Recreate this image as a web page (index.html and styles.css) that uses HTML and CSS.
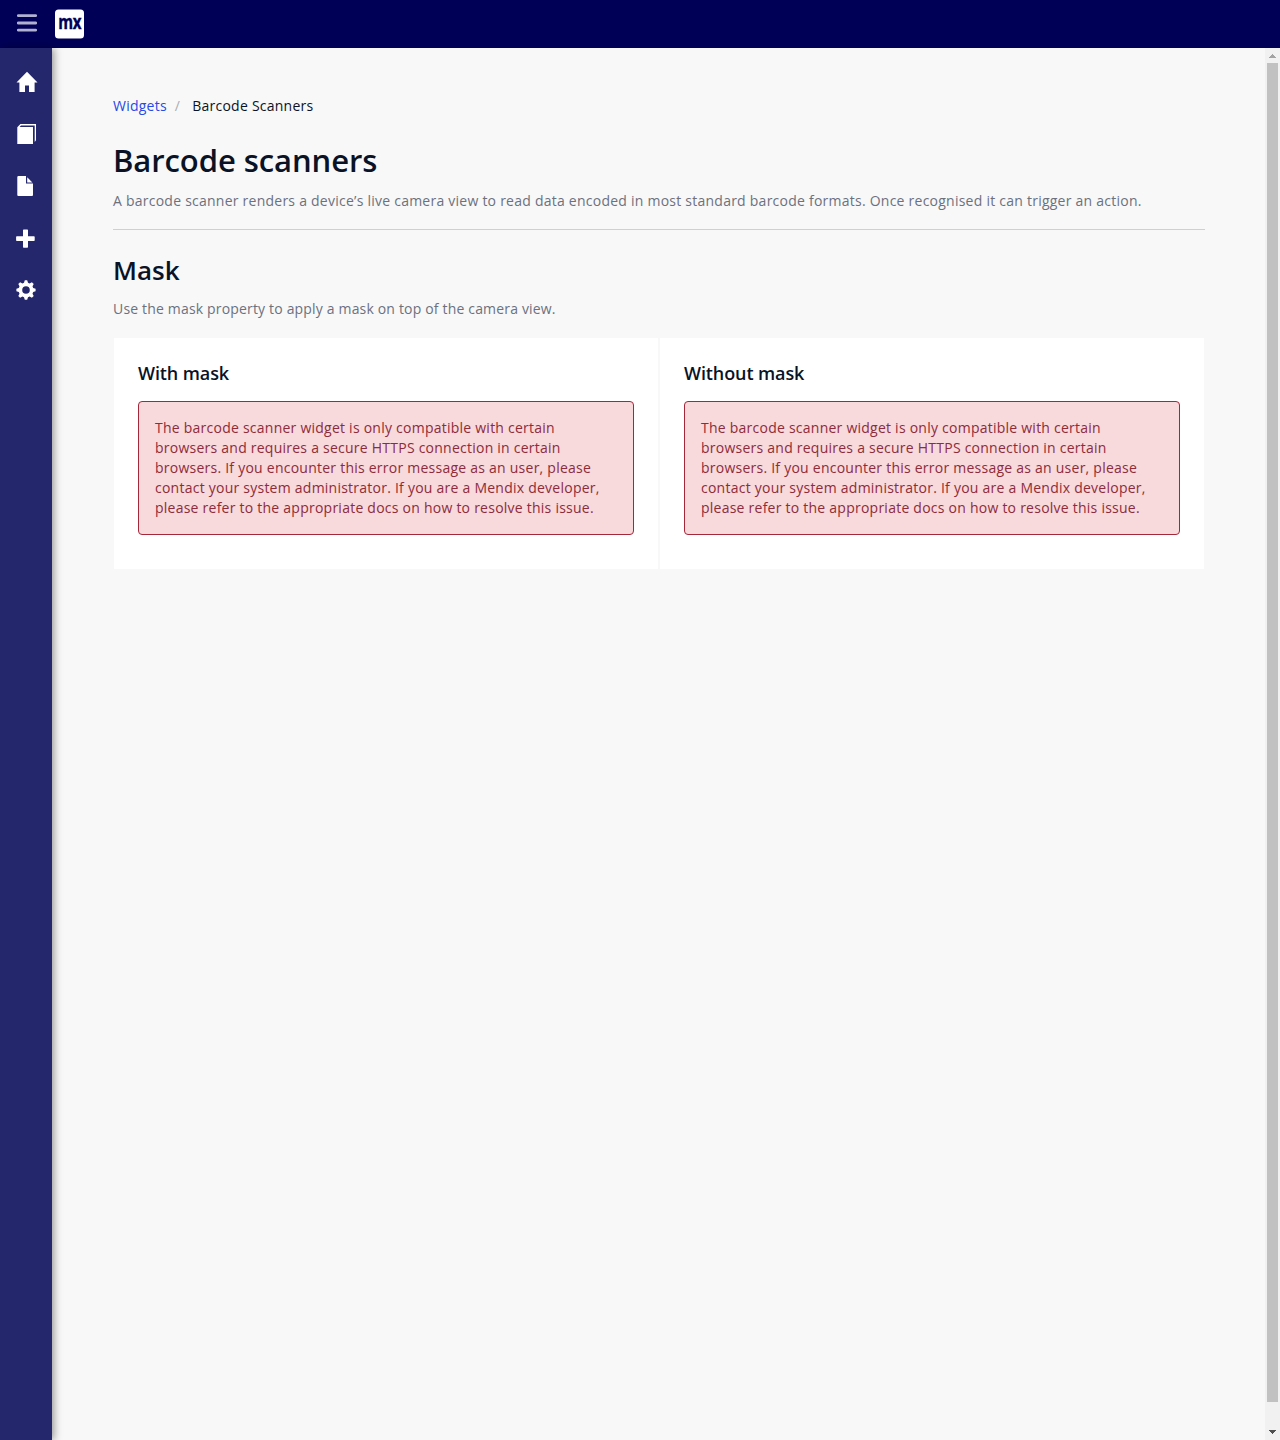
FILE: index.html
```html
<!DOCTYPE html>
<html lang="en">
<head>
<meta charset="utf-8">
<title>Barcode scanners</title>
<link rel="stylesheet" href="styles.css">
</head>
<body>
<header class="topbar">
  <svg class="menu" width="20" height="18" viewBox="0 0 20 18"><path d="M1.3 1.7h17.4M1.3 9h17.4M1.3 16.1h17.4"/></svg>
  <svg class="logo" width="29" height="30" viewBox="0 0 29 30"><rect y=".5" width="29" height="29" rx="3.5"/><text x="3.2" y="20" textLength="22.8" lengthAdjust="spacingAndGlyphs">mx</text></svg>
</header>
<div class="shell">
  <nav class="sidebar">
    <a class="nav-item"><svg viewBox="0 0 22 22"><path d="M11 .7 21.5 11.4H18.6V21H13V14.5H9V21H3.4V11.4H.5Z"/></svg></a>
    <a class="nav-item"><svg viewBox="0 0 22 22"><path d="M1.3 4.2 4.4 1H20V17.3L18.7 19V2.6H5L3.6 4H17V21H1.3Z"/></svg></a>
    <a class="nav-item"><svg viewBox="0 0 22 22"><path d="M1.3 2.2Q1.3 1 2.4 1H10V8.6H17V20Q17 21 16 21H2.3Q1.3 21 1.3 20Z"/><path d="M11.2 2.3 16.4 7.4H11.2Z"/></svg></a>
    <a class="nav-item"><svg viewBox="0 0 22 22"><path d="M7.7 2.500h3.6q.7 0 .7.7V9.200h6q.7 0 .7.7v3.4q0 .7-.7.7h-6v6q0 .7-.7.7H7.7q-.7 0-.7-.7v-6H.8q-.7 0-.7-.7V9.9q0-.7.7-.7H7V3.2Q7 2.500 7.700 2.500Z"/></svg></a>
    <a class="nav-item"><svg viewBox="0 0 22 22"><path fill-rule="evenodd" d="M8.800 1.300H11.200L12 3.700 13.600 4.400 15.900 3.200 17.700 5 16.500 7.300 17.200 8.900 19.600 9.800V12.200L17.200 13 16.500 14.700 17.700 17 15.900 18.800 13.600 17.600 12 18.300 11.200 20.700H8.800L8 18.300 6.400 17.600 4.100 18.800 2.300 17 3.500 14.700 2.800 13 .4 12.200V9.800L2.800 8.900 3.500 7.300 2.300 5 4.100 3.200 6.400 4.400 8 3.700ZM10 7.200A3.800 3.800 0 1 0 10 14.800 3.800 3.800 0 1 0 10 7.200Z"/></svg></a>
  </nav>
  <main class="page">
    <div class="breadcrumb"><a class="crumb-link">Widgets</a><span class="crumb-separator">/</span><span>Barcode Scanners</span></div>
    <h1 class="title">Barcode scanners</h1>
    <p class="description">A barcode scanner renders a device’s live camera view to read data encoded in most standard barcode formats. Once recognised it can trigger an action.</p>
    <hr class="divider">
    <h2 class="section-title">Mask</h2>
    <p class="description section-description">Use the mask property to apply a mask on top of the camera view.</p>
    <div class="cards">
      <section class="card">
        <h3 class="card-title">With mask</h3>
        <div class="alert">The barcode scanner widget is only compatible with certain browsers and requires a secure HTTPS connection in certain browsers. If you encounter this error message as an user, please contact your system administrator. If you are a Mendix developer, please refer to the appropriate docs on how to resolve this issue.</div>
      </section>
      <section class="card">
        <h3 class="card-title">Without mask</h3>
        <div class="alert">The barcode scanner widget is only compatible with certain browsers and requires a secure HTTPS connection in certain browsers. If you encounter this error message as an user, please contact your system administrator. If you are a Mendix developer, please refer to the appropriate docs on how to resolve this issue.</div>
      </section>
    </div>
  </main>
  <div class="scrollbar">
    <svg class="arrow arrow-up" width="15" height="15" viewBox="0 0 15 15" shape-rendering="crispEdges"><path d="M7 6h1v1h1v1h1v1h1v1H4V9h1V8h1V7h1z"/></svg>
    <div class="thumb"></div>
    <svg class="arrow" width="15" height="15" viewBox="0 0 15 15" shape-rendering="crispEdges"><path d="M4 5h7v1h-1v1H9v1H8v1H7V8H6V7H5V6H4z"/></svg>
  </div>
</div>
</body>
</html>
```
FILE: styles.css
```css
* { box-sizing: border-box; }
body {
  margin: 0;
  height: 1440px;
  display: flex;
  flex-direction: column;
  overflow: hidden;
  background: #f8f8f8;
  color: #0a1326;
  font: 14px/20px "Open Sans", sans-serif;
  letter-spacing: .24px;
}
h1, h2, h3, p { margin: 0; font-weight: 600; }
.topbar {
  height: 48px;
  flex: none;
  display: flex;
  align-items: center;
  gap: 18px;
  padding-left: 17px;
  background: #000057;
}
.menu { margin-top: -2px; fill: none; stroke: #b0b0d0; stroke-width: 2.8; stroke-linecap: round; }
.logo { fill: #fff; overflow: visible; }
.logo text { font: 700 19px/1 "Open Sans", sans-serif; letter-spacing: -.5px; fill: #000057; stroke: #000057; stroke-width: .4; }
.shell { flex: 1; display: flex; min-height: 0; }
.sidebar {
  width: 52px;
  flex: none;
  padding-top: 8px;
  background: #24276c;
  box-shadow: 2px 0 8px rgba(0, 0, 0, .4);
}
.nav-item { height: 52px; display: flex; align-items: center; padding-left: 16px; }
.nav-item svg { width: 22px; height: 22px; fill: #fff; }
.page { flex: 1; min-width: 0; padding: 48px 60px 0 61px; }
.breadcrumb { display: flex; }
.crumb-link { color: #264ae5; }
.crumb-separator { color: #a9acb3; padding: 0 12px 0 8px; }
.title { margin-top: 23px; font-size: 31px; line-height: 42px; letter-spacing: -.08px; }
.description { font-weight: 400; color: #6c717e; }
.section-description { letter-spacing: .17px; }
.title + .description { margin-top: 10px; }
.divider { margin: 18px 0 0; border: 0; height: 1px; background: #ced0d3; }
.section-title { margin-top: 22px; font-size: 26px; line-height: 36px; letter-spacing: 0; }
.section-title + .description { margin-top: 11px; }
.cards { display: grid; grid-template-columns: 1fr 1fr; gap: 2px; margin-top: 19px; padding: 0 1px; }
.card { height: 231px; padding: 23px 24px; background: #fff; }
.card-title { font-size: 18px; line-height: 24px; margin-bottom: 16px; letter-spacing: -.1px; }
.alert {
  padding: 16px;
  border: 1px solid #a4273a;
  border-radius: 4px;
  background: #f8d9dc;
  color: #8d2c3a;
}
.scrollbar { width: 15px; flex: none; display: flex; flex-direction: column; background: #f1f1f1; }
.thumb { width: 11px; height: 1339px; margin-left: 2px; margin-bottom: auto; background: #c1c1c1; }
.arrow { flex: none; fill: #505050; }
.arrow-up { fill: #a3a3a3; }
```
